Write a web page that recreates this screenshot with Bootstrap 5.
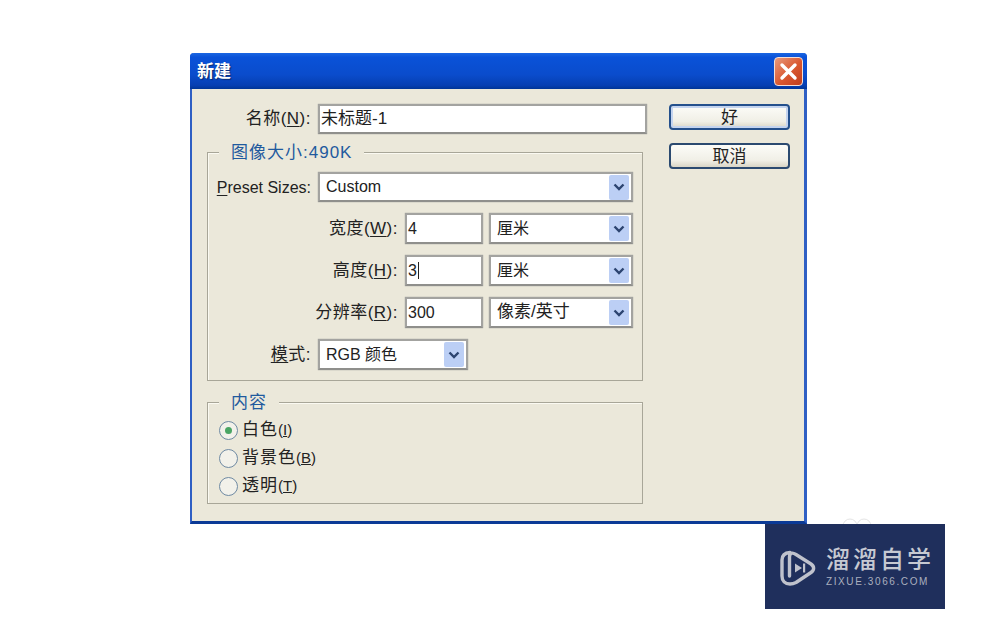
<!DOCTYPE html>
<html lang="zh-CN">
<head>
  <meta charset="UTF-8" />
  <meta name="viewport" content="width=device-width, initial-scale=1.0" />
  <title>新建</title>
  <link href="https://cdn.jsdelivr.net/npm/bootstrap@5.3.2/dist/css/bootstrap.min.css" rel="stylesheet" />
  <style>
    body { background: #fff; font-family: "Liberation Sans", "Noto Sans CJK SC", sans-serif; color: #222; font-size: 16px; line-height: 1.2; }
    .stage { position: relative; height: 625px; padding: 53px 0 0 190px; overflow: hidden; }
    .dlg { width: 617px; height: 471px; background: #ebe8da; border: solid #2f5fc4; border-width: 0 3px 3px 2px; border-bottom-color: #0b3a96; border-radius: 4px 4px 0 0; }
    .dlg-title { height: 36px; margin: 0 -3px 0 -2px; padding: 2px 4px 0 7px; border-radius: 4px 4px 0 0; background: linear-gradient(#1b66e2 0, #0a52d8 12%, #0a4ccc 60%, #063fb2 90%, #003596 100%); color: #fff; font-weight: 700; font-size: 17px; text-shadow: 1px 1px 1px #0a2a70; }
    .btn-close-x { width: 29px; height: 29px; margin-top: -2px; border: 1px solid #f4ded6; border-radius: 4px; background: linear-gradient(135deg, #e89a7c, #d9572f 55%, #c13d1c); }
    .left-col { width: 457px; }
    .name-row { margin-top: 15px; margin-bottom: 18px; }
    .lbl { width: 126px; padding: 1px 7px 0 0; text-align: right; flex: none; font-size: 17px; letter-spacing: .5px; }
    .lbl.latin { font-size: 16px; letter-spacing: 0; }
    .lbl u { text-underline-offset: 2px; }
    .fld { height: 31px; background: #fff; border: 2px solid #a3a3a0; border-bottom-color: #8f8f8c; padding: 0 2px 0 1px; font-size: 16px; box-shadow: 0 0 1px #8f8f8c; }
    .big-txt { font-size: 17px; }
    .fld-name { width: 329px; height: 30px; }
    .fld-sel { padding-left: 6px; }
    .w-preset { width: 315px; height: 30px; }
    .w-num { width: 78px; margin-right: 6px; }
    .w-unit { width: 144px; }
    .w-mode { width: 150px; }
    .caret { width: 20px; height: 25px; margin: 0 0 0 auto; border-radius: 2px; background: #bccff5; }
    .cursor { display: inline-block; width: 1px; height: 17px; background: #222; margin-left: 1px; vertical-align: -3px; }
    .grp { margin-left: 15px; width: 436px; border: 1px solid #a8a698; box-shadow: 1px 1px 0 #fbfaf2 inset; }
    .grp-head { width: fit-content; height: 20px; margin: -10px 0 0 11px; padding: 0 12px; background: #ebe8da; color: #1f5a9e; font-size: 17px; letter-spacing: 1px; }
    .grp-one { height: 229px; }
    .grp-one .fld-row { margin-bottom: 11px; }
    .grp-one .head-gap { margin-bottom: 9px; }
    .grp-one .lbl { width: 110px; }
    .grp-one .lbl.wide { width: 197px; }
    .grp-two { height: 102px; margin-top: 21px; }
    .radio-list { padding-top: 3px; }
    .radio-row { height: 28px; padding-left: 11px; }
    .radio-dot { width: 19px; height: 19px; flex: none; border: 1.5px solid #6f8aa3; border-radius: 50%; background: #f2f1ea; margin-right: 4px; }
    .radio-dot.on::after { content: ""; width: 7px; height: 7px; border-radius: 50%; background: #4aa564; }
    .radio-txt { font-size: 17px; letter-spacing: 1px; }
    .radio-txt small { font-size: 15px; letter-spacing: 0; }
    .right-col { padding: 15px 0 0 20px; }
    .dlg-btn { width: 121px; height: 26px; padding: 1px 0 0; border: 2px solid #2b4a70; border-radius: 4px; background: linear-gradient(#fcfcf8, #f0efe6 70%, #d9d5c6); color: #222; font-size: 17px; line-height: 20px; }
    .dlg-btn.ok { border-color: #24508c; box-shadow: inset 0 0 0 2px #c4d4ef; margin-bottom: 13px; }
    .ghost { position: absolute; left: 842px; top: 517px; }
    .brand { position: absolute; left: 765px; top: 524px; width: 180px; height: 85px; background: #1f2f5c; color: #c6c9d2; padding: 24px 0 0 15px; }
    .brand-ico { margin: 2px 10px 0 0; }
    .brand-cn { font-size: 24px; line-height: 24px; letter-spacing: 3px; font-weight: 500; white-space: nowrap; }
    .brand-en { font-size: 10px; line-height: 12px; letter-spacing: 1.6px; margin-top: 4px; color: #aab0bf; white-space: nowrap; }
  </style>
</head>
<body>
  <div class="stage">
    <div class="dlg d-flex flex-column">
      <div class="dlg-title d-flex align-items-center justify-content-between">
        <span>新建</span>
        <span class="btn-close-x d-flex align-items-center justify-content-center">
          <svg width="19" height="19" viewBox="0 0 19 19"><path d="M3 3L16 16M16 3L3 16" stroke="#fff" stroke-width="3.4" stroke-linecap="round"/></svg>
        </span>
      </div>
      <div class="d-flex">
        <div class="left-col">
          <div class="name-row d-flex align-items-center">
            <div class="lbl">名称(<u>N</u>):</div>
            <div class="fld fld-name big-txt d-flex align-items-center">未标题-1</div>
          </div>

          <div class="grp grp-one">
            <div class="grp-head head-gap">图像大小:490K</div>
            <div class="fld-row d-flex align-items-center">
              <div class="lbl latin"><u>P</u>reset Sizes:</div>
              <div class="fld fld-sel w-preset d-flex align-items-center">Custom<span class="caret d-flex align-items-center justify-content-center"><svg width="12" height="8" viewBox="0 0 12 8"><path d="M1.5 1.5L6 6L10.5 1.5" fill="none" stroke="#2c4470" stroke-width="2.4"/></svg></span></div>
            </div>
            <div class="fld-row d-flex align-items-center">
              <div class="lbl wide">宽度(<u>W</u>):</div>
              <div class="fld w-num d-flex align-items-center">4</div>
              <div class="fld fld-sel w-unit d-flex align-items-center">厘米<span class="caret d-flex align-items-center justify-content-center"><svg width="12" height="8" viewBox="0 0 12 8"><path d="M1.5 1.5L6 6L10.5 1.5" fill="none" stroke="#2c4470" stroke-width="2.4"/></svg></span></div>
            </div>
            <div class="fld-row d-flex align-items-center">
              <div class="lbl wide">高度(<u>H</u>):</div>
              <div class="fld w-num d-flex align-items-center"><span>3</span><span class="cursor"></span></div>
              <div class="fld fld-sel w-unit d-flex align-items-center">厘米<span class="caret d-flex align-items-center justify-content-center"><svg width="12" height="8" viewBox="0 0 12 8"><path d="M1.5 1.5L6 6L10.5 1.5" fill="none" stroke="#2c4470" stroke-width="2.4"/></svg></span></div>
            </div>
            <div class="fld-row d-flex align-items-center">
              <div class="lbl wide">分辨率(<u>R</u>):</div>
              <div class="fld w-num d-flex align-items-center">300</div>
              <div class="fld fld-sel w-unit big-txt d-flex align-items-center">像素/英寸<span class="caret d-flex align-items-center justify-content-center"><svg width="12" height="8" viewBox="0 0 12 8"><path d="M1.5 1.5L6 6L10.5 1.5" fill="none" stroke="#2c4470" stroke-width="2.4"/></svg></span></div>
            </div>
            <div class="fld-row d-flex align-items-center">
              <div class="lbl"><u>模</u>式:</div>
              <div class="fld fld-sel w-mode d-flex align-items-center">RGB 颜色<span class="caret d-flex align-items-center justify-content-center"><svg width="12" height="8" viewBox="0 0 12 8"><path d="M1.5 1.5L6 6L10.5 1.5" fill="none" stroke="#2c4470" stroke-width="2.4"/></svg></span></div>
            </div>
          </div>

          <div class="grp grp-two">
            <div class="grp-head">内容</div>
            <div class="radio-list">
              <div class="radio-row d-flex align-items-center"><span class="radio-dot on d-flex align-items-center justify-content-center"></span><span class="radio-txt">白色<small>(<u>I</u>)</small></span></div>
              <div class="radio-row d-flex align-items-center"><span class="radio-dot"></span><span class="radio-txt">背景色<small>(<u>B</u>)</small></span></div>
              <div class="radio-row d-flex align-items-center"><span class="radio-dot"></span><span class="radio-txt">透明<small>(<u>T</u>)</small></span></div>
            </div>
          </div>
        </div>
        <div class="right-col d-flex flex-column">
          <button type="button" class="dlg-btn ok">好</button>
          <button type="button" class="dlg-btn">取消</button>
        </div>
      </div>
    </div>

    <svg class="ghost" width="30" height="8" viewBox="0 0 30 8"><circle cx="8" cy="9" r="7" fill="none" stroke="#e4e4e4"/><circle cx="22" cy="9" r="7" fill="none" stroke="#e4e4e4"/></svg>
    <div class="brand d-flex">
      <svg class="brand-ico" width="36" height="36" viewBox="0 0 36 36">
        <path d="M10 2.5C4 3 2 6 2 10V26C2 31 5 34 10 34C12.5 34 14 33.5 16 32.5L31 22.5C34.5 20 34.5 16.5 31 14L16 4.5C12 2 9.5 3 9.5 7V26" fill="none" stroke="#bfc2cc" stroke-width="3.4" stroke-linecap="round" stroke-linejoin="round"/>
        <path d="M15 13.5L22 18L15 22.5Z" fill="#bfc2cc"/>
        <rect x="23" y="13.5" width="2.2" height="9" fill="#bfc2cc"/>
      </svg>
      <div>
        <div class="brand-cn">溜溜自学</div>
        <div class="brand-en">ZIXUE.3066.COM</div>
      </div>
    </div>
  </div>
  <script src="https://cdn.jsdelivr.net/npm/bootstrap@5.3.2/dist/js/bootstrap.bundle.min.js"></script>
</body>
</html>
